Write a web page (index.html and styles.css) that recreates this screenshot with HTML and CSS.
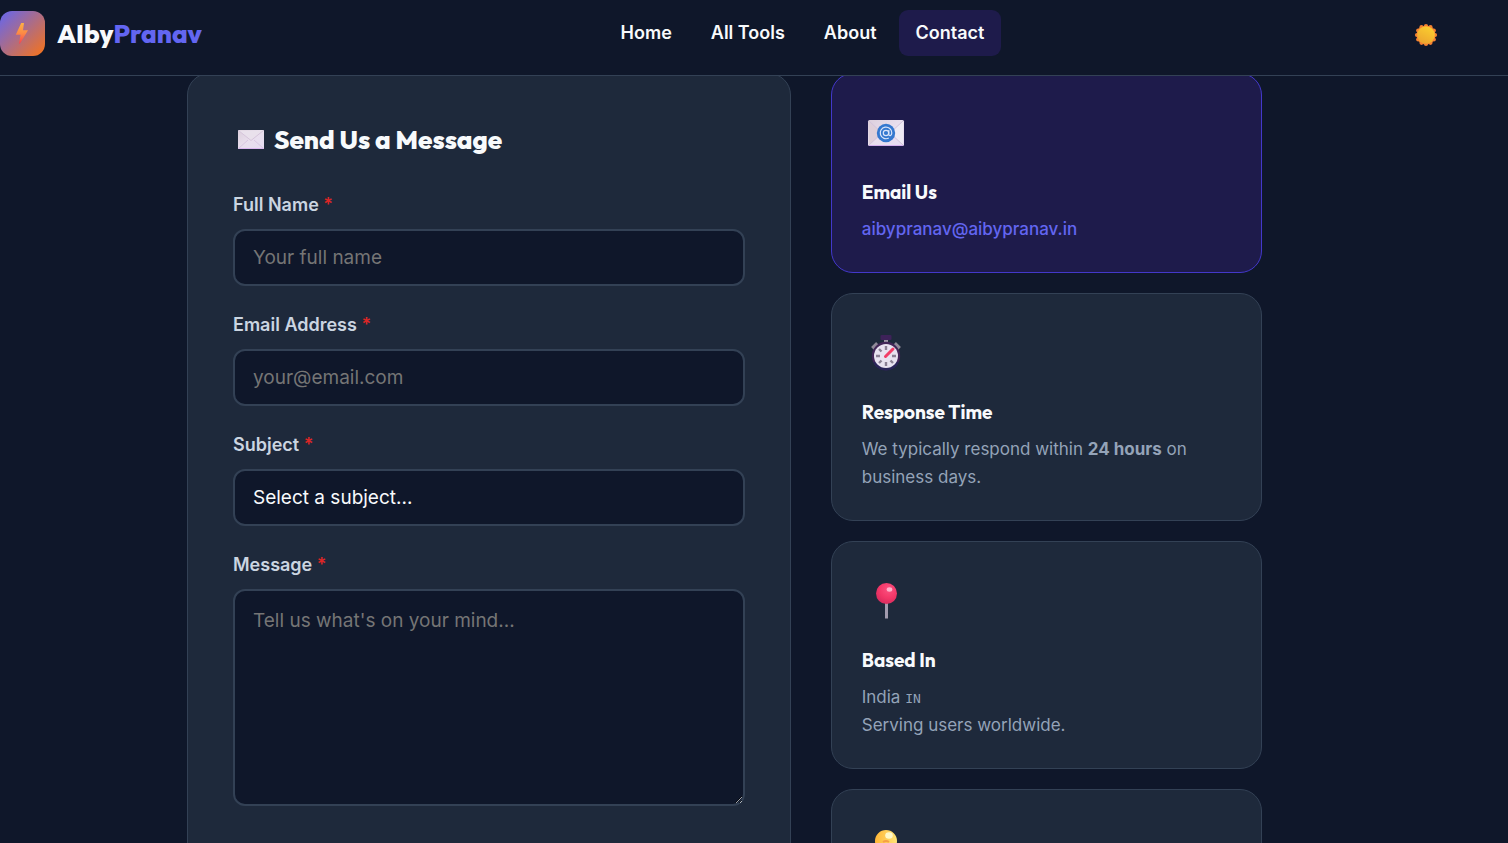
FILE: index.html
```html
<!doctype html>
<html lang="en">
  <head>
    <meta charset="UTF-8" />
    <meta name="viewport" content="width=device-width, initial-scale=1.0" />
    <title>AIbyPranav</title>
    <link rel="stylesheet" href="styles.css" />
  </head>
  <body>
    <header class="navbar">
      <div class="nav-inner">
        <a class="logo" href="#">
          <span class="logo-icon">
            <svg width="15" height="22" viewBox="0 0 15 22">
              <defs>
                <linearGradient id="bolt" x1="0" y1="0" x2="0" y2="1">
                  <stop offset="0" stop-color="#fdb043" />
                  <stop offset="0.5" stop-color="#fc8a45" />
                  <stop offset="1" stop-color="#f8434f" />
                </linearGradient>
              </defs>
              <path d="M6.200 1H9L8 8.200h5L5 21.500H4l1.600-8.700H.8z" fill="url(#bolt)" />
            </svg>
          </span>
          <span class="logo-text">AIby<span class="accent">Pranav</span></span>
        </a>
        <nav class="nav-links">
          <a href="#">Home</a>
          <a href="#">All Tools</a>
          <a href="#">About</a>
          <a href="#" class="active">Contact</a>
        </nav>
        <button class="theme-toggle" type="button">
          <svg width="24" height="24" viewBox="0 0 24 24">
            <defs>
              <linearGradient id="sun" x1="0.8" y1="0" x2="0.3" y2="1">
                <stop offset="0" stop-color="#fbd02f" />
                <stop offset="1" stop-color="#eda52f" />
              </linearGradient>
            </defs>
            <g fill="#f58232">
              <circle cx="12" cy="12" r="9.6" />
              <circle cx="12" cy="3" r="2.1" />
              <circle cx="16.5" cy="4.2" r="2.1" />
              <circle cx="19.8" cy="7.5" r="2.1" />
              <circle cx="21" cy="12" r="2.1" />
              <circle cx="19.8" cy="16.5" r="2.1" />
              <circle cx="16.5" cy="19.8" r="2.1" />
              <circle cx="12" cy="21" r="2.1" />
              <circle cx="7.5" cy="19.8" r="2.1" />
              <circle cx="4.2" cy="16.5" r="2.1" />
              <circle cx="3" cy="12" r="2.1" />
              <circle cx="4.2" cy="7.5" r="2.1" />
              <circle cx="7.5" cy="4.2" r="2.1" />
            </g>
            <circle cx="12" cy="12" r="8.8" fill="url(#sun)" />
          </svg>
        </button>
      </div>
    </header>

    <main class="page">
      <div class="contact-grid">
        <form class="card form-card">
          <h2>
            <svg width="36" height="26" viewBox="0 0 36 26">
              <defs>
                <linearGradient id="paper" x1="0" y1="0" x2="1" y2="1">
                  <stop offset="0" stop-color="#dccfdc" />
                  <stop offset="0.5" stop-color="#e9dfee" />
                  <stop offset="1" stop-color="#e6dcf2" />
                </linearGradient>
              </defs>
              <rect x="5" y="3" width="26" height="19" rx="1" fill="url(#paper)" />
              <path d="M5 21.500h26" stroke="#dcb8f2" />
              <path d="M5.500 21.500 15 13M30.500 21.500 21 13" stroke="#d8c6e2" fill="none" />
              <path d="M5.500 3.500 18 13.500 30.500 3.500" fill="#e9e1ec" stroke="#d6c5dc" />
            </svg>
            Send Us a Message
          </h2>

          <div class="form-group">
            <label for="name">Full Name <span class="required">*</span></label>
            <input id="name" type="text" placeholder="Your full name" />
          </div>
          <div class="form-group">
            <label for="email">Email Address <span class="required">*</span></label>
            <input id="email" type="email" placeholder="your@email.com" />
          </div>
          <div class="form-group">
            <label for="subject">Subject <span class="required">*</span></label>
            <select id="subject">
              <option>Select a subject...</option>
            </select>
          </div>
          <div class="form-group">
            <label for="message">Message <span class="required">*</span></label>
            <textarea id="message" placeholder="Tell us what's on your mind..."></textarea>
          </div>
        </form>

        <div class="info-list">
          <section class="card info-card highlight">
            <div class="info-icon">
              <svg width="48" height="48" viewBox="0 0 48 48">
                <rect x="6" y="11" width="36" height="26" rx="1.500" fill="url(#paper)" />
                <path d="M7 36.500h34" stroke="#d5b0ee" />
                <path d="M7 12 20 24 7 36z" fill="#dfd0da" />
                <path d="M41 12 28 24 41 36z" fill="#eeeaf4" />
                <path d="M7 12 20 24M41 12 28 24M7 36 20 24M41 36 28 24" stroke="#d3c3dc" />
                <circle cx="24" cy="24" r="9.200" fill="#3478cf" />
                <g fill="none" stroke="#d9e4fa" stroke-width="1.200">
                  <circle cx="24" cy="24" r="2.700" />
                  <path d="M26.800 21v4.200c0 2.200 3 1.800 3-1.200a5.800 5.800 0 1 0-3 5" />
                </g>
              </svg>
            </div>
            <h3>Email Us</h3>
            <p><a href="mailto:aibypranav@aibypranav.in">aibypranav@aibypranav.in</a></p>
          </section>

          <section class="card info-card">
            <div class="info-icon">
              <svg width="48" height="48" viewBox="0 0 48 48">
                <rect x="18.500" y="6" width="11" height="5" rx="1" fill="#3d2259" />
                <path d="M24 11v4" stroke="#9c94a5" stroke-width="4" />
                <path d="m10.500 19.500 5-5M37.500 19.500l-5-5" stroke="#8f8998" stroke-width="4" />
                <circle cx="24" cy="27" r="14.200" fill="#412657" />
                <path d="M11 33a14.200 14.200 0 0 0 26 0" fill="#292458" />
                <circle cx="24" cy="27" r="12" fill="#e8e2f0" />
                <g stroke="#8b8094" stroke-width="2.400">
                  <path d="M24 17v4M24 33v4M14 27h4M30 27h4M17 20l2.500 2.500M17 34l2.500-2.500M31 34l-2.500-2.500" />
                </g>
                <path d="m23.500 27.500 7.500-7.500" stroke="#f23d67" stroke-width="3" stroke-linecap="round" />
              </svg>
            </div>
            <h3>Response Time</h3>
            <p>We typically respond within <strong>24 hours</strong> on business days.</p>
          </section>

          <section class="card info-card">
            <div class="info-icon">
              <svg width="48" height="48" viewBox="0 0 48 48">
                <defs>
                  <radialGradient id="pin" cx="0.600" cy="0.300" r="0.700">
                    <stop offset="0" stop-color="#fa5280" />
                    <stop offset="0.600" stop-color="#f33768" />
                    <stop offset="1" stop-color="#d92c5e" />
                  </radialGradient>
                </defs>
                <path d="M24.500 24v17.500" stroke="#a29bae" stroke-width="3" />
                <circle cx="24.500" cy="16.500" r="10.500" fill="url(#pin)" />
                <ellipse cx="27.500" cy="12.500" rx="2.800" ry="2.200" fill="#ffb2cb" />
              </svg>
            </div>
            <h3>Based In</h3>
            <p>India <span class="flag">IN</span><br />Serving users worldwide.</p>
          </section>

          <section class="card info-card">
            <div class="info-icon">
              <svg width="48" height="48" viewBox="0 0 48 48">
                <defs>
                  <linearGradient id="bulb" x1="0" y1="0" x2="1" y2="0">
                    <stop offset="0" stop-color="#ffb637" />
                    <stop offset="1" stop-color="#ffe477" />
                  </linearGradient>
                </defs>
                <path d="M24 5a11 11 0 0 1 11 11c0 7-5 9-6 16H19c-1-7-6-9-6-16A11 11 0 0 1 24 5z" fill="url(#bulb)" />
                <ellipse cx="27" cy="10.500" rx="3.800" ry="3.300" fill="#fff8c9" />
                <path d="M21 17q3-2 6 0" stroke="#f6a044" stroke-width="2" fill="none" />
                <path d="M19 34h10v6H19z" fill="#9b93a5" />
              </svg>
            </div>
          </section>
        </div>
      </div>
    </main>
  </body>
</html>
```
FILE: styles.css
```css
:root {
  --bg: #0f172a;
  --surface: #1e293b;
  --border: #334155;
  --primary: #6366f1;
  --primary-soft: #1e1b4b;
  --text: #f8fafc;
  --text-muted: #94a3b8;
  --font-body: Inter, "Liberation Sans", sans-serif;
  --font-heading: Outfit, Lato, "Liberation Sans", sans-serif;
}

* {
  box-sizing: border-box;
  margin: 0;
  padding: 0;
}

body {
  height: 100vh;
  overflow: hidden;
  background: var(--bg);
  color: var(--text);
  font-family: var(--font-body);
  font-size: 18px;
}

a {
  color: inherit;
  text-decoration: none;
}

svg {
  display: block;
}

/* Navbar */
.navbar {
  position: sticky;
  top: 0;
  z-index: 10;
  padding: 10px 0 19px;
  background: var(--bg);
  border-bottom: 1px solid var(--border);
}

.nav-inner {
  display: flex;
  align-items: center;
  justify-content: space-between;
  max-width: 1449px;
}

.logo {
  display: flex;
  align-items: center;
  gap: 12px;
}

.logo-icon {
  display: flex;
  align-items: center;
  justify-content: center;
  width: 45px;
  height: 45px;
  border-radius: 12px;
  background: linear-gradient(135deg, #6366f1, #f97316);
}

.logo-text {
  font-family: var(--font-heading);
  font-size: 26px;
  font-weight: 800;
}

.accent {
  color: var(--primary);
}

.nav-links {
  display: flex;
  gap: 5px;
}

.nav-links a {
  padding: 0 17px;
  border-radius: 9px;
  font-weight: 600;
  line-height: 46px;
}

.nav-links .active {
  background: var(--primary-soft);
}

.theme-toggle {
  display: flex;
  align-items: center;
  justify-content: center;
  width: 46px;
  height: 46px;
  padding-top: 4px;
  border: none;
  background: none;
  cursor: pointer;
}

/* Contact */
.page {
  display: flow-root;
  max-width: 1449px;
}

.contact-grid {
  display: grid;
  grid-template-columns: 1.4fr 1fr;
  gap: 40px;
  max-width: 1075px;
  margin: -3px auto 0;
}

.card {
  background: var(--surface);
  border: 1px solid var(--border);
  border-radius: 22px;
}

.form-card {
  padding: 45px;
}

.form-card h2 {
  display: flex;
  align-items: center;
  gap: 5px;
  margin-bottom: 31px;
  font-family: var(--font-heading);
  font-size: 26px;
  font-weight: 800;
  line-height: 42px;
}

.form-group {
  margin-bottom: 26px;
}

.form-group label {
  display: block;
  margin-bottom: 11px;
  color: #cbd5e1;
  font-weight: 600;
  line-height: 26px;
}

.required {
  color: #dc2626;
}

.form-group input,
.form-group select,
.form-group textarea {
  display: block;
  width: 100%;
  height: 57px;
  padding: 0 18px;
  background: var(--bg);
  border: 2px solid var(--border);
  border-radius: 12px;
  color: var(--text);
  font-family: inherit;
  font-size: 19px;
  appearance: none;
}

.form-group textarea {
  height: 217px;
  padding: 14px 18px;
  line-height: 31px;
  resize: vertical;
}

::placeholder {
  color: #757575;
}

.info-list {
  display: flex;
  flex-direction: column;
  gap: 20px;
}

.info-card {
  padding: 30px 30px 29px;
}

.highlight {
  background: var(--primary-soft);
  border-color: #4338ca;
}

.info-icon {
  display: flex;
  align-items: center;
  height: 58px;
  margin-bottom: 18px;
}

.info-card h3 {
  margin-bottom: 11px;
  font-family: var(--font-heading);
  font-size: 19px;
  font-weight: 700;
  line-height: 24px;
}

.info-card p {
  color: var(--text-muted);
  font-size: 17px;
  line-height: 28px;
}

.info-card p a {
  color: var(--primary);
  font-weight: 500;
}

.flag {
  font-family: "DejaVu Sans Mono", monospace;
  font-size: 13px;
  line-height: 1;
}

@media (max-width: 900px) {
  body {
    height: auto;
    overflow: visible;
  }

  .contact-grid {
    grid-template-columns: 1fr;
  }
}
```
